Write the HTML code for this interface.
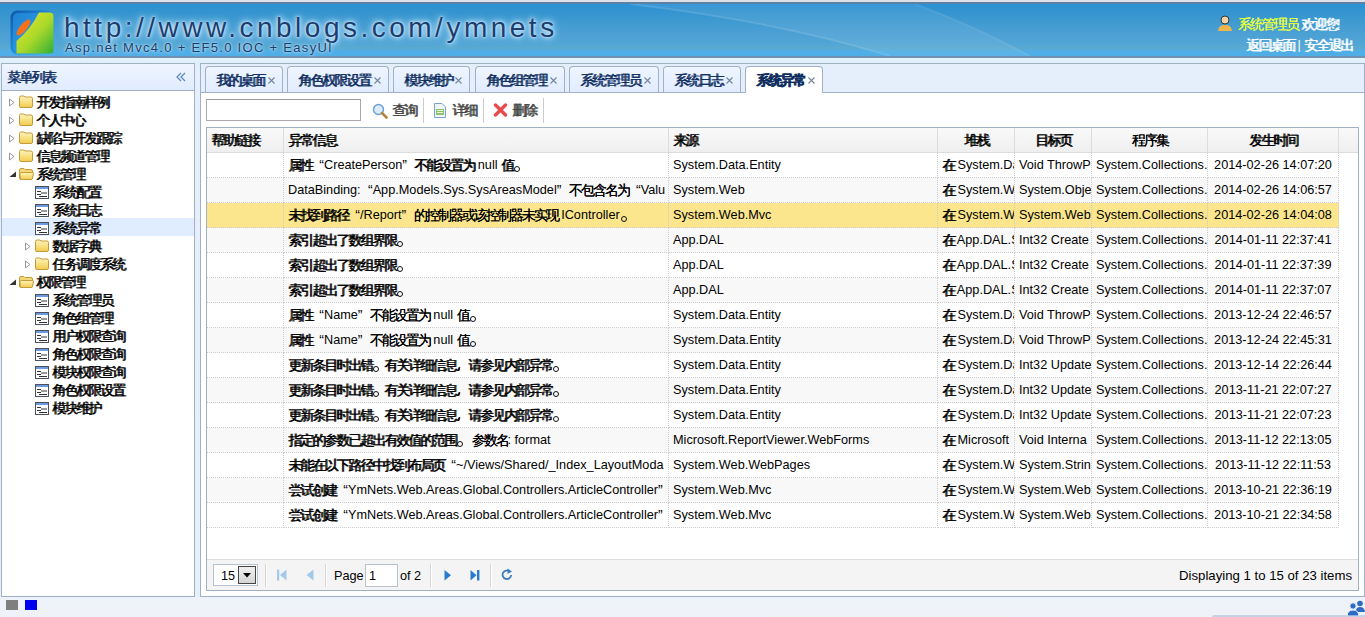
<!DOCTYPE html><html><head><meta charset="utf-8"><title>YmNets</title><style>*{margin:0;padding:0;box-sizing:border-box}
html,body{width:1365px;height:617px;overflow:hidden;background:#eef2fa;font-family:"Liberation Sans",sans-serif;font-size:12.7px;color:#000;position:relative}
em{font-style:normal;display:inline-block;width:12px;text-align:center;font-size:14px;line-height:1;position:relative;top:1px;text-shadow:0.5px 0 0 currentColor}
em.pd,em.pc{color:transparent;text-shadow:none}
em.pd:after{content:"";position:absolute;left:1px;top:8px;width:4px;height:4px;border:1px solid #111;border-radius:50%}
em.pc:after{content:"";position:absolute;left:2px;top:9px;width:2px;height:4px;background:#111;border-radius:1px 1px 1px 0;transform:skewX(-15deg)}
em.ql{text-align:right;text-shadow:none}
em.qr{text-align:left;text-shadow:none}
i{position:absolute;display:block;font-style:normal;line-height:0}
#hd{position:absolute;left:0;top:0;width:1365px;height:58px;background:linear-gradient(to bottom,#dde1ea 0,#dde1ea 2px,#6283a3 2px,#557fa6 4px,#2a92d8 4px,#3193d0 9px,#3d99d0 20px,#4a9fd4 32px,#52a6d6 44px,#5aa9cf 48px,#50aee6 51px,#50aee6 56px,#7092b0 56px,#7092b0 58px)}
#hdb{position:absolute;left:0;top:58px;width:1365px;height:539px;background:linear-gradient(#e4f5fc 0,#e0eefa 4px,#e5eefb 10px,#e7effb 100%)}
#logo{position:absolute;left:10px;top:10px;width:45px;height:45px}
#title{position:absolute;left:64px;top:12px;font-size:28px;letter-spacing:3.5px;color:#1b3d6e;text-shadow:0 0 2px #d8f0ff,0 0 4px #c8e9fc,0 0 7px #b0dcf7,0 0 10px #a0d4f4;white-space:nowrap}
#sub{position:absolute;left:65px;top:40px;font-size:13px;letter-spacing:1.3px;color:#1b3d6e;text-shadow:0 0 2px #d2eefd,0 0 4px #b8e2fa;white-space:nowrap}
#usr{position:absolute;left:1216px;top:15px;white-space:nowrap;color:#fff}
#usr b{font-weight:normal;color:#e6ff3c}
#lnk{position:absolute;left:1246px;top:37px;white-space:nowrap;color:#fff}
#lp{position:absolute;left:1px;top:63px;width:194px;height:534px;border:1px solid #a2b0c4;background:#fff}
#lph{position:absolute;left:0;top:0;width:192px;height:27px;border-bottom:1px solid #a2b0c4;background:linear-gradient(to bottom,#eff5ff 0,#e0ecff 100%)}
#lph .t{position:absolute;left:5px;top:5px;color:#0e2d5f;white-space:nowrap}
#lph .t em{text-shadow:0.6px 0 0 currentColor}
#lph .coll{position:absolute;left:173px;top:8px}
#lpb{position:absolute;left:0;top:27px;width:192px;height:505px}
.tn{position:absolute;left:0;width:192px;height:18px}
.tn.sel{background:#e0ecff}
.tn span{position:absolute;top:2px;white-space:nowrap;color:#000;line-height:16px}
.ic{top:1px;width:16px;height:16px}
#rp{position:absolute;left:200px;top:63px;width:1165px;height:534px;border:1px solid #a2b0c4;background:#fff}
#tabsh{position:absolute;left:0;top:0;width:1163px;height:29px;background:#e4effb;border-bottom:1px solid #a2b0c4}
.tab{position:absolute;top:2px;height:26px;border:1px solid #a2b0c4;border-bottom:0;border-radius:4px 4px 0 0;background:linear-gradient(to bottom,#eff5ff 0,#e0ecff 100%)}
.tab.tsel{background:#fff;height:27px}
.tab.tsel .tt{font-weight:bold}
.tab.tsel .tt em{text-shadow:0.7px 0 0 currentColor}
.tab .tt{position:absolute;left:10px;top:5px;white-space:nowrap;color:#0e2d5f;line-height:16px}
.tab .tx{position:absolute;right:7px;top:10px}
#tb{position:absolute;left:0;top:29px;width:1163px;height:34px}
#sinp{position:absolute;left:5px;top:6px;width:155px;height:22px;border:1px solid #a9a9a9;border-top-color:#9c9c9c;background:#fff}
.lb{position:absolute;top:9px;line-height:16px;color:#444;white-space:nowrap}
.sep{position:absolute;top:5px;width:2px;height:25px;border-left:1px solid #ccc;border-right:1px solid #fff}
#dg{position:absolute;left:5px;top:63px;width:1153px;height:464px;border:1px solid #a2b0c4;background:#fff}
#dgh{position:absolute;left:0;top:0;width:1151px;height:25px;background:linear-gradient(to bottom,#f9f9f9 0,#efefef 100%);border-bottom:1px solid #dddddd}
.hc{position:absolute;top:0;height:24px;border-right:1px solid #dddddd;padding:0 4px;line-height:24px;white-space:nowrap;overflow:hidden}
#dgb{position:absolute;left:0;top:25px;width:1151px;height:375px}
.row{position:absolute;left:0;width:1132px;height:25px;background:#fff}
.row.alt{background:#f8f8f8}
.row.rsel{background:#fbe68d}
.bc{position:absolute;top:0;height:25px;border-right:1px dotted #cccccc;border-bottom:1px dotted #cccccc;padding:0 4px;line-height:24px;white-space:nowrap;overflow:hidden}
#pg{position:absolute;left:0;top:431px;width:1151px;height:31px;background:#f5f4f4;border-top:1px solid #dddddd}
#psel{position:absolute;left:6px;top:4px;width:45px;height:22px;border:1px solid #b7c2cf;background:#fff}
#pbtn{position:absolute;left:24px;top:1px;width:18px;height:18px;border:1px solid #444;background:linear-gradient(#f0f0f0,#d4d4d4)}
.psep{position:absolute;top:4px;width:2px;height:23px;border-left:1px solid #d6d6d6;border-right:1px solid #fff}
.plb{position:absolute;top:8px;line-height:16px;white-space:nowrap}
#pinp{position:absolute;left:158px;top:4px;width:33px;height:23px;border:1px solid #b7c2cf;background:#fff}
#pinfo{left:auto;right:6px;font-size:13.2px}
#ft{position:absolute;left:0;top:597px;width:1365px;height:20px;background:linear-gradient(to bottom,#eef2fa 0,#eff2f7 100%)}
#ftbar{position:absolute;left:1212px;top:18px;width:153px;height:2px;border-radius:2px 0 0 0;background:#c3d3e3}
</style></head><body>
<svg width="0" height="0" style="position:absolute"><defs><linearGradient id="gf" x1="0" y1="0" x2="0" y2="1"><stop offset="0" stop-color="#fff6b8"/><stop offset="1" stop-color="#f1cc4e"/></linearGradient></defs></svg>
<div id="hdb"></div><div id="hd">
<svg id="wave" style="position:absolute;left:0;top:4px" width="1365" height="52" viewBox="0 0 1365 52"><path d="M630 0 Q780 18 890 52 L1030 52 Q975 22 915 0Z" fill="#ffffff" opacity="0.07"/><path d="M630 0 Q780 18 890 52" fill="none" stroke="#ffffff" stroke-width="2" opacity="0.12"/><path d="M915 0 Q975 22 1030 52" fill="none" stroke="#ffffff" stroke-width="2" opacity="0.08"/></svg><svg id="logo" viewBox="0 0 45 45"><defs><linearGradient id="lg1" x1="0" y1="0" x2="1" y2="1"><stop offset="0" stop-color="#0f55a8"/><stop offset="0.5" stop-color="#1f8fe0"/><stop offset="1" stop-color="#3ec0ec"/></linearGradient><linearGradient id="lg2" x1="0" y1="0" x2="1" y2="1"><stop offset="0" stop-color="#f0e82a"/><stop offset="0.55" stop-color="#a8d82a"/><stop offset="1" stop-color="#2eae36"/></linearGradient></defs><rect x="0.5" y="0.5" width="44" height="44" rx="7" fill="url(#lg1)"/><rect x="3" y="3" width="39" height="39" rx="5" fill="#2d9be6" opacity="0.6"/><path d="M29 2.5 L40 2.5 Q43.5 2.5 43.5 6 L43.5 40 Q43.5 43.5 40 43.5 L6.5 43.5 L6.5 31 Q20 20 29 2.5Z" fill="url(#lg2)"/><ellipse cx="13.5" cy="17.5" rx="10" ry="3.5" transform="rotate(-50 13.5 17.5)" fill="#f7701c"/></svg>
<div id="title">http://www.cnblogs.com/ymnets</div>
<div id="sub">Asp.net Mvc4.0 + EF5.0 IOC + EasyUI</div>
<div id="usr"><svg width="18" height="16" style="vertical-align:-3px"><circle cx="9" cy="5" r="4" fill="#f4d3a8" stroke="#333" stroke-width="1"/><path d="M2 16 Q3 9 9 10 Q15 9 16 16Z" fill="#f0b64a"/></svg> <b><em>系</em><em>统</em><em>管</em><em>理</em><em>员</em></b> <em>欢</em><em>迎</em><em>您</em>!</div>
<div id="lnk"><em>返</em><em>回</em><em>桌</em><em>面</em> | <em>安</em><em>全</em><em>退</em><em>出</em></div>
</div>

<div id="lp"><div id="lph"><span class="t"><em>菜</em><em>单</em><em>列</em><em>表</em></span><svg class="coll" width="12" height="10" viewBox="0 0 12 10"><path d="M6 1 L2 5 L6 9 M10 1 L6 5 L10 9" fill="none" stroke="#5b87c1" stroke-width="1.2"/></svg></div><div id="lpb">
<div class="tn" style="top:1px">
<i class="exp" style="left:6px;top:6px"><svg width="8" height="9" viewBox="0 0 8 9"><path d="M1.5 1 L6 4.5 L1.5 8Z" fill="none" stroke="#9a9a9a" stroke-width="1"/></svg></i>
<i class="ic" style="left:16px"><svg width="16" height="16" viewBox="0 0 16 16"><path d="M1.5 4.5 Q1.5 3 3 3 L6 3 L7 4 L13 4 Q14.5 4 14.5 5.5 L14.5 13 Q14.5 14.5 13 14.5 L3 14.5 Q1.5 14.5 1.5 13Z" fill="url(#gf)" stroke="#c49a3c" stroke-width="1"/><path d="M2 6 L14 6" stroke="#f7e9a8" stroke-width="1"/></svg></i>
<span style="left:34px"><em>开</em><em>发</em><em>指</em><em>南</em><em>样</em><em>例</em></span></div>
<div class="tn" style="top:19px">
<i class="exp" style="left:6px;top:6px"><svg width="8" height="9" viewBox="0 0 8 9"><path d="M1.5 1 L6 4.5 L1.5 8Z" fill="none" stroke="#9a9a9a" stroke-width="1"/></svg></i>
<i class="ic" style="left:16px"><svg width="16" height="16" viewBox="0 0 16 16"><path d="M1.5 4.5 Q1.5 3 3 3 L6 3 L7 4 L13 4 Q14.5 4 14.5 5.5 L14.5 13 Q14.5 14.5 13 14.5 L3 14.5 Q1.5 14.5 1.5 13Z" fill="url(#gf)" stroke="#c49a3c" stroke-width="1"/><path d="M2 6 L14 6" stroke="#f7e9a8" stroke-width="1"/></svg></i>
<span style="left:34px"><em>个</em><em>人</em><em>中</em><em>心</em></span></div>
<div class="tn" style="top:37px">
<i class="exp" style="left:6px;top:6px"><svg width="8" height="9" viewBox="0 0 8 9"><path d="M1.5 1 L6 4.5 L1.5 8Z" fill="none" stroke="#9a9a9a" stroke-width="1"/></svg></i>
<i class="ic" style="left:16px"><svg width="16" height="16" viewBox="0 0 16 16"><path d="M1.5 4.5 Q1.5 3 3 3 L6 3 L7 4 L13 4 Q14.5 4 14.5 5.5 L14.5 13 Q14.5 14.5 13 14.5 L3 14.5 Q1.5 14.5 1.5 13Z" fill="url(#gf)" stroke="#c49a3c" stroke-width="1"/><path d="M2 6 L14 6" stroke="#f7e9a8" stroke-width="1"/></svg></i>
<span style="left:34px"><em>缺</em><em>陷</em><em>与</em><em>开</em><em>发</em><em>跟</em><em>踪</em></span></div>
<div class="tn" style="top:55px">
<i class="exp" style="left:6px;top:6px"><svg width="8" height="9" viewBox="0 0 8 9"><path d="M1.5 1 L6 4.5 L1.5 8Z" fill="none" stroke="#9a9a9a" stroke-width="1"/></svg></i>
<i class="ic" style="left:16px"><svg width="16" height="16" viewBox="0 0 16 16"><path d="M1.5 4.5 Q1.5 3 3 3 L6 3 L7 4 L13 4 Q14.5 4 14.5 5.5 L14.5 13 Q14.5 14.5 13 14.5 L3 14.5 Q1.5 14.5 1.5 13Z" fill="url(#gf)" stroke="#c49a3c" stroke-width="1"/><path d="M2 6 L14 6" stroke="#f7e9a8" stroke-width="1"/></svg></i>
<span style="left:34px"><em>信</em><em>息</em><em>频</em><em>道</em><em>管</em><em>理</em></span></div>
<div class="tn" style="top:73px">
<i class="exp" style="left:6px;top:7px"><svg width="8" height="8" viewBox="0 0 8 8"><path d="M8 0.5 L8 6 L1.5 6Z" fill="#333"/></svg></i>
<i class="ic" style="left:16px"><svg width="16" height="16" viewBox="0 0 16 16"><path d="M1.5 5 Q1.5 3.5 3 3.5 L6 3.5 L7 4.5 L13 4.5 Q14.5 4.5 14.5 6 L14.5 13 Q14.5 14.5 13 14.5 L3 14.5 Q1.5 14.5 1.5 13Z" fill="#f3d774" stroke="#c49a3c" stroke-width="1"/><path d="M2 8.5 Q2.2 7.5 3.5 7.5 L15 7.5 Q15.8 7.5 15.4 8.8 L14.5 13.5 Q14.2 14.5 13 14.5 L3.5 14.5 Q2.5 14.5 2.3 13.5Z" fill="url(#gf)" stroke="#c49a3c" stroke-width="1"/></svg></i>
<span style="left:34px"><em>系</em><em>统</em><em>管</em><em>理</em></span></div>
<div class="tn" style="top:91px">
<i class="ic" style="left:32px;top:2px"><svg width="16" height="16" viewBox="0 0 16 16"><rect x="1.5" y="2.5" width="13" height="12" fill="#fff" stroke="#4a4f5c" stroke-width="1"/><rect x="2" y="3" width="12" height="2" fill="#6d9be0"/><path d="M3 7.5 H7 M3 10.5 H7 M7 9 H13 M5 12.5 H13" stroke="#333" stroke-width="1"/></svg></i>
<span style="left:50px"><em>系</em><em>统</em><em>配</em><em>置</em></span></div>
<div class="tn" style="top:109px">
<i class="ic" style="left:32px;top:2px"><svg width="16" height="16" viewBox="0 0 16 16"><rect x="1.5" y="2.5" width="13" height="12" fill="#fff" stroke="#4a4f5c" stroke-width="1"/><rect x="2" y="3" width="12" height="2" fill="#6d9be0"/><path d="M3 7.5 H7 M3 10.5 H7 M7 9 H13 M5 12.5 H13" stroke="#333" stroke-width="1"/></svg></i>
<span style="left:50px"><em>系</em><em>统</em><em>日</em><em>志</em></span></div>
<div class="tn sel" style="top:127px">
<i class="ic" style="left:32px;top:2px"><svg width="16" height="16" viewBox="0 0 16 16"><rect x="1.5" y="2.5" width="13" height="12" fill="#fff" stroke="#4a4f5c" stroke-width="1"/><rect x="2" y="3" width="12" height="2" fill="#6d9be0"/><path d="M3 7.5 H7 M3 10.5 H7 M7 9 H13 M5 12.5 H13" stroke="#333" stroke-width="1"/></svg></i>
<span style="left:50px"><em>系</em><em>统</em><em>异</em><em>常</em></span></div>
<div class="tn" style="top:145px">
<i class="exp" style="left:22px;top:6px"><svg width="8" height="9" viewBox="0 0 8 9"><path d="M1.5 1 L6 4.5 L1.5 8Z" fill="none" stroke="#9a9a9a" stroke-width="1"/></svg></i>
<i class="ic" style="left:32px"><svg width="16" height="16" viewBox="0 0 16 16"><path d="M1.5 4.5 Q1.5 3 3 3 L6 3 L7 4 L13 4 Q14.5 4 14.5 5.5 L14.5 13 Q14.5 14.5 13 14.5 L3 14.5 Q1.5 14.5 1.5 13Z" fill="url(#gf)" stroke="#c49a3c" stroke-width="1"/><path d="M2 6 L14 6" stroke="#f7e9a8" stroke-width="1"/></svg></i>
<span style="left:50px"><em>数</em><em>据</em><em>字</em><em>典</em></span></div>
<div class="tn" style="top:163px">
<i class="exp" style="left:22px;top:6px"><svg width="8" height="9" viewBox="0 0 8 9"><path d="M1.5 1 L6 4.5 L1.5 8Z" fill="none" stroke="#9a9a9a" stroke-width="1"/></svg></i>
<i class="ic" style="left:32px"><svg width="16" height="16" viewBox="0 0 16 16"><path d="M1.5 4.5 Q1.5 3 3 3 L6 3 L7 4 L13 4 Q14.5 4 14.5 5.5 L14.5 13 Q14.5 14.5 13 14.5 L3 14.5 Q1.5 14.5 1.5 13Z" fill="url(#gf)" stroke="#c49a3c" stroke-width="1"/><path d="M2 6 L14 6" stroke="#f7e9a8" stroke-width="1"/></svg></i>
<span style="left:50px"><em>任</em><em>务</em><em>调</em><em>度</em><em>系</em><em>统</em></span></div>
<div class="tn" style="top:181px">
<i class="exp" style="left:6px;top:7px"><svg width="8" height="8" viewBox="0 0 8 8"><path d="M8 0.5 L8 6 L1.5 6Z" fill="#333"/></svg></i>
<i class="ic" style="left:16px"><svg width="16" height="16" viewBox="0 0 16 16"><path d="M1.5 5 Q1.5 3.5 3 3.5 L6 3.5 L7 4.5 L13 4.5 Q14.5 4.5 14.5 6 L14.5 13 Q14.5 14.5 13 14.5 L3 14.5 Q1.5 14.5 1.5 13Z" fill="#f3d774" stroke="#c49a3c" stroke-width="1"/><path d="M2 8.5 Q2.2 7.5 3.5 7.5 L15 7.5 Q15.8 7.5 15.4 8.8 L14.5 13.5 Q14.2 14.5 13 14.5 L3.5 14.5 Q2.5 14.5 2.3 13.5Z" fill="url(#gf)" stroke="#c49a3c" stroke-width="1"/></svg></i>
<span style="left:34px"><em>权</em><em>限</em><em>管</em><em>理</em></span></div>
<div class="tn" style="top:199px">
<i class="ic" style="left:32px;top:2px"><svg width="16" height="16" viewBox="0 0 16 16"><rect x="1.5" y="2.5" width="13" height="12" fill="#fff" stroke="#4a4f5c" stroke-width="1"/><rect x="2" y="3" width="12" height="2" fill="#6d9be0"/><path d="M3 7.5 H7 M3 10.5 H7 M7 9 H13 M5 12.5 H13" stroke="#333" stroke-width="1"/></svg></i>
<span style="left:50px"><em>系</em><em>统</em><em>管</em><em>理</em><em>员</em></span></div>
<div class="tn" style="top:217px">
<i class="ic" style="left:32px;top:2px"><svg width="16" height="16" viewBox="0 0 16 16"><rect x="1.5" y="2.5" width="13" height="12" fill="#fff" stroke="#4a4f5c" stroke-width="1"/><rect x="2" y="3" width="12" height="2" fill="#6d9be0"/><path d="M3 7.5 H7 M3 10.5 H7 M7 9 H13 M5 12.5 H13" stroke="#333" stroke-width="1"/></svg></i>
<span style="left:50px"><em>角</em><em>色</em><em>组</em><em>管</em><em>理</em></span></div>
<div class="tn" style="top:235px">
<i class="ic" style="left:32px;top:2px"><svg width="16" height="16" viewBox="0 0 16 16"><rect x="1.5" y="2.5" width="13" height="12" fill="#fff" stroke="#4a4f5c" stroke-width="1"/><rect x="2" y="3" width="12" height="2" fill="#6d9be0"/><path d="M3 7.5 H7 M3 10.5 H7 M7 9 H13 M5 12.5 H13" stroke="#333" stroke-width="1"/></svg></i>
<span style="left:50px"><em>用</em><em>户</em><em>权</em><em>限</em><em>查</em><em>询</em></span></div>
<div class="tn" style="top:253px">
<i class="ic" style="left:32px;top:2px"><svg width="16" height="16" viewBox="0 0 16 16"><rect x="1.5" y="2.5" width="13" height="12" fill="#fff" stroke="#4a4f5c" stroke-width="1"/><rect x="2" y="3" width="12" height="2" fill="#6d9be0"/><path d="M3 7.5 H7 M3 10.5 H7 M7 9 H13 M5 12.5 H13" stroke="#333" stroke-width="1"/></svg></i>
<span style="left:50px"><em>角</em><em>色</em><em>权</em><em>限</em><em>查</em><em>询</em></span></div>
<div class="tn" style="top:271px">
<i class="ic" style="left:32px;top:2px"><svg width="16" height="16" viewBox="0 0 16 16"><rect x="1.5" y="2.5" width="13" height="12" fill="#fff" stroke="#4a4f5c" stroke-width="1"/><rect x="2" y="3" width="12" height="2" fill="#6d9be0"/><path d="M3 7.5 H7 M3 10.5 H7 M7 9 H13 M5 12.5 H13" stroke="#333" stroke-width="1"/></svg></i>
<span style="left:50px"><em>模</em><em>块</em><em>权</em><em>限</em><em>查</em><em>询</em></span></div>
<div class="tn" style="top:289px">
<i class="ic" style="left:32px;top:2px"><svg width="16" height="16" viewBox="0 0 16 16"><rect x="1.5" y="2.5" width="13" height="12" fill="#fff" stroke="#4a4f5c" stroke-width="1"/><rect x="2" y="3" width="12" height="2" fill="#6d9be0"/><path d="M3 7.5 H7 M3 10.5 H7 M7 9 H13 M5 12.5 H13" stroke="#333" stroke-width="1"/></svg></i>
<span style="left:50px"><em>角</em><em>色</em><em>权</em><em>限</em><em>设</em><em>置</em></span></div>
<div class="tn" style="top:307px">
<i class="ic" style="left:32px;top:2px"><svg width="16" height="16" viewBox="0 0 16 16"><rect x="1.5" y="2.5" width="13" height="12" fill="#fff" stroke="#4a4f5c" stroke-width="1"/><rect x="2" y="3" width="12" height="2" fill="#6d9be0"/><path d="M3 7.5 H7 M3 10.5 H7 M7 9 H13 M5 12.5 H13" stroke="#333" stroke-width="1"/></svg></i>
<span style="left:50px"><em>模</em><em>块</em><em>维</em><em>护</em></span></div>
</div></div>
<div id="rp"><div id="tabsh">
<div class="tab" style="left:4px;width:78px"><span class="tt"><em>我</em><em>的</em><em>桌</em><em>面</em></span><svg class="tx" width="7" height="7" viewBox="0 0 7 7"><path d="M0.5 0.5 L6.5 6.5 M6.5 0.5 L0.5 6.5" stroke="#75849c" stroke-width="1.1"/></svg></div>
<div class="tab" style="left:86px;width:102px"><span class="tt"><em>角</em><em>色</em><em>权</em><em>限</em><em>设</em><em>置</em></span><svg class="tx" width="7" height="7" viewBox="0 0 7 7"><path d="M0.5 0.5 L6.5 6.5 M6.5 0.5 L0.5 6.5" stroke="#75849c" stroke-width="1.1"/></svg></div>
<div class="tab" style="left:192px;width:77px"><span class="tt"><em>模</em><em>块</em><em>维</em><em>护</em></span><svg class="tx" width="7" height="7" viewBox="0 0 7 7"><path d="M0.5 0.5 L6.5 6.5 M6.5 0.5 L0.5 6.5" stroke="#75849c" stroke-width="1.1"/></svg></div>
<div class="tab" style="left:274px;width:90px"><span class="tt"><em>角</em><em>色</em><em>组</em><em>管</em><em>理</em></span><svg class="tx" width="7" height="7" viewBox="0 0 7 7"><path d="M0.5 0.5 L6.5 6.5 M6.5 0.5 L0.5 6.5" stroke="#75849c" stroke-width="1.1"/></svg></div>
<div class="tab" style="left:368px;width:90px"><span class="tt"><em>系</em><em>统</em><em>管</em><em>理</em><em>员</em></span><svg class="tx" width="7" height="7" viewBox="0 0 7 7"><path d="M0.5 0.5 L6.5 6.5 M6.5 0.5 L0.5 6.5" stroke="#75849c" stroke-width="1.1"/></svg></div>
<div class="tab" style="left:462px;width:78px"><span class="tt"><em>系</em><em>统</em><em>日</em><em>志</em></span><svg class="tx" width="7" height="7" viewBox="0 0 7 7"><path d="M0.5 0.5 L6.5 6.5 M6.5 0.5 L0.5 6.5" stroke="#75849c" stroke-width="1.1"/></svg></div>
<div class="tab tsel" style="left:544px;width:78px"><span class="tt"><em>系</em><em>统</em><em>异</em><em>常</em></span><svg class="tx" width="7" height="7" viewBox="0 0 7 7"><path d="M0.5 0.5 L6.5 6.5 M6.5 0.5 L0.5 6.5" stroke="#75849c" stroke-width="1.1"/></svg></div>
</div>
<div id="tb">
<div id="sinp"></div>
<i style="left:171px;top:10px"><svg width="16" height="16" viewBox="0 0 16 16"><circle cx="6.5" cy="6.5" r="5" fill="#d8ecfb" stroke="#6a9fcf" stroke-width="1.4"/><path d="M10 10 L14.5 14.5" stroke="#b0863a" stroke-width="2.6" stroke-linecap="round"/></svg></i>
<span class="lb" style="left:191px"><em>查</em><em>询</em></span>
<span class="sep" style="left:222px"></span>
<i style="left:232px;top:9px"><svg width="14" height="17" viewBox="0 0 14 17"><path d="M1.5 1.5 H9 L12.5 5 V15.5 H1.5Z" fill="#eef5fc" stroke="#7fa3c8" stroke-width="1"/><rect x="3" y="7" width="8" height="6" fill="#8cc06a"/><path d="M4 8.5 H10 M4 10.5 H10" stroke="#e9f6df" stroke-width="1"/></svg></i>
<span class="lb" style="left:251px"><em>详</em><em>细</em></span>
<span class="sep" style="left:282px"></span>
<i style="left:292px;top:10px"><svg width="15" height="14" viewBox="0 0 15 14"><path d="M2.5 2 L12.5 12 M12.5 2 L2.5 12" stroke="#e84b4b" stroke-width="3.4" stroke-linecap="round"/></svg></i>
<span class="lb" style="left:311px"><em>删</em><em>除</em></span>
<span class="sep" style="left:342px"></span>
</div>

<div id="dg"><div id="dgh">
<div class="hc" style="left:0px;width:77px;text-align:left"><em>帮</em><em>助</em><em>链</em><em>接</em></div>
<div class="hc" style="left:77px;width:385px;text-align:left"><em>异</em><em>常</em><em>信</em><em>息</em></div>
<div class="hc" style="left:462px;width:269px;text-align:left"><em>来</em><em>源</em></div>
<div class="hc" style="left:731px;width:77px;text-align:center"><em>堆</em><em>栈</em></div>
<div class="hc" style="left:808px;width:77px;text-align:center"><em>目</em><em>标</em><em>页</em></div>
<div class="hc" style="left:885px;width:116px;text-align:center"><em>程</em><em>序</em><em>集</em></div>
<div class="hc" style="left:1001px;width:131px;text-align:center"><em>发</em><em>生</em><em>时</em><em>间</em></div>
</div><div id="dgb">
<div class="row" style="top:0px">
<div class="bc" style="left:0px;width:77px"></div>
<div class="bc" style="left:77px;width:385px"><em>属</em><em>性</em><em class="ql">“</em>CreatePerson<em class="qr">”</em><em>不</em><em>能</em><em>设</em><em>置</em><em>为</em> null <em>值</em><em class="pd">。</em></div>
<div class="bc" style="left:462px;width:269px">System.Data.Entity</div>
<div class="bc" style="left:731px;width:77px"><em>在</em> System.Data.Entity</div>
<div class="bc" style="left:808px;width:77px">Void ThrowPropertyIsNull</div>
<div class="bc" style="left:885px;width:116px">System.Collections.</div>
<div class="bc" style="left:1001px;width:131px;text-align:center">2014-02-26 14:07:20</div>
</div>
<div class="row alt" style="top:25px">
<div class="bc" style="left:0px;width:77px"></div>
<div class="bc" style="left:77px;width:385px">DataBinding:<em class="ql">“</em>App.Models.Sys.SysAreasModel<em class="qr">”</em><em>不</em><em>包</em><em>含</em><em>名</em><em>为</em><em class="ql">“</em>Valu</div>
<div class="bc" style="left:462px;width:269px">System.Web</div>
<div class="bc" style="left:731px;width:77px"><em>在</em> System.Web.UI</div>
<div class="bc" style="left:808px;width:77px">System.Object GetProperty</div>
<div class="bc" style="left:885px;width:116px">System.Collections.</div>
<div class="bc" style="left:1001px;width:131px;text-align:center">2014-02-26 14:06:57</div>
</div>
<div class="row rsel" style="top:50px">
<div class="bc" style="left:0px;width:77px"></div>
<div class="bc" style="left:77px;width:385px"><em>未</em><em>找</em><em>到</em><em>路</em><em>径</em><em class="ql">“</em>/Report<em class="qr">”</em><em>的</em><em>控</em><em>制</em><em>器</em><em>或</em><em>该</em><em>控</em><em>制</em><em>器</em><em>未</em><em>实</em><em>现</em> IController<em class="pd">。</em></div>
<div class="bc" style="left:462px;width:269px">System.Web.Mvc</div>
<div class="bc" style="left:731px;width:77px"><em>在</em> System.Web.Mvc</div>
<div class="bc" style="left:808px;width:77px">System.Web.Mvc</div>
<div class="bc" style="left:885px;width:116px">System.Collections.</div>
<div class="bc" style="left:1001px;width:131px;text-align:center">2014-02-26 14:04:08</div>
</div>
<div class="row alt" style="top:75px">
<div class="bc" style="left:0px;width:77px"></div>
<div class="bc" style="left:77px;width:385px"><em>索</em><em>引</em><em>超</em><em>出</em><em>了</em><em>数</em><em>组</em><em>界</em><em>限</em><em class="pd">。</em></div>
<div class="bc" style="left:462px;width:269px">App.DAL</div>
<div class="bc" style="left:731px;width:77px"><em>在</em> App.DAL.SysException</div>
<div class="bc" style="left:808px;width:77px">Int32 Create</div>
<div class="bc" style="left:885px;width:116px">System.Collections.</div>
<div class="bc" style="left:1001px;width:131px;text-align:center">2014-01-11 22:37:41</div>
</div>
<div class="row" style="top:100px">
<div class="bc" style="left:0px;width:77px"></div>
<div class="bc" style="left:77px;width:385px"><em>索</em><em>引</em><em>超</em><em>出</em><em>了</em><em>数</em><em>组</em><em>界</em><em>限</em><em class="pd">。</em></div>
<div class="bc" style="left:462px;width:269px">App.DAL</div>
<div class="bc" style="left:731px;width:77px"><em>在</em> App.DAL.SysException</div>
<div class="bc" style="left:808px;width:77px">Int32 Create</div>
<div class="bc" style="left:885px;width:116px">System.Collections.</div>
<div class="bc" style="left:1001px;width:131px;text-align:center">2014-01-11 22:37:39</div>
</div>
<div class="row alt" style="top:125px">
<div class="bc" style="left:0px;width:77px"></div>
<div class="bc" style="left:77px;width:385px"><em>索</em><em>引</em><em>超</em><em>出</em><em>了</em><em>数</em><em>组</em><em>界</em><em>限</em><em class="pd">。</em></div>
<div class="bc" style="left:462px;width:269px">App.DAL</div>
<div class="bc" style="left:731px;width:77px"><em>在</em> App.DAL.SysException</div>
<div class="bc" style="left:808px;width:77px">Int32 Create</div>
<div class="bc" style="left:885px;width:116px">System.Collections.</div>
<div class="bc" style="left:1001px;width:131px;text-align:center">2014-01-11 22:37:07</div>
</div>
<div class="row" style="top:150px">
<div class="bc" style="left:0px;width:77px"></div>
<div class="bc" style="left:77px;width:385px"><em>属</em><em>性</em><em class="ql">“</em>Name<em class="qr">”</em><em>不</em><em>能</em><em>设</em><em>置</em><em>为</em> null <em>值</em><em class="pd">。</em></div>
<div class="bc" style="left:462px;width:269px">System.Data.Entity</div>
<div class="bc" style="left:731px;width:77px"><em>在</em> System.Data.Entity</div>
<div class="bc" style="left:808px;width:77px">Void ThrowPropertyIsNull</div>
<div class="bc" style="left:885px;width:116px">System.Collections.</div>
<div class="bc" style="left:1001px;width:131px;text-align:center">2013-12-24 22:46:57</div>
</div>
<div class="row alt" style="top:175px">
<div class="bc" style="left:0px;width:77px"></div>
<div class="bc" style="left:77px;width:385px"><em>属</em><em>性</em><em class="ql">“</em>Name<em class="qr">”</em><em>不</em><em>能</em><em>设</em><em>置</em><em>为</em> null <em>值</em><em class="pd">。</em></div>
<div class="bc" style="left:462px;width:269px">System.Data.Entity</div>
<div class="bc" style="left:731px;width:77px"><em>在</em> System.Data.Entity</div>
<div class="bc" style="left:808px;width:77px">Void ThrowPropertyIsNull</div>
<div class="bc" style="left:885px;width:116px">System.Collections.</div>
<div class="bc" style="left:1001px;width:131px;text-align:center">2013-12-24 22:45:31</div>
</div>
<div class="row" style="top:200px">
<div class="bc" style="left:0px;width:77px"></div>
<div class="bc" style="left:77px;width:385px"><em>更</em><em>新</em><em>条</em><em>目</em><em>时</em><em>出</em><em>错</em><em class="pd">。</em><em>有</em><em>关</em><em>详</em><em>细</em><em>信</em><em>息</em><em class="pc">，</em><em>请</em><em>参</em><em>见</em><em>内</em><em>部</em><em>异</em><em>常</em><em class="pd">。</em></div>
<div class="bc" style="left:462px;width:269px">System.Data.Entity</div>
<div class="bc" style="left:731px;width:77px"><em>在</em> System.Data.Entity</div>
<div class="bc" style="left:808px;width:77px">Int32 Update</div>
<div class="bc" style="left:885px;width:116px">System.Collections.</div>
<div class="bc" style="left:1001px;width:131px;text-align:center">2013-12-14 22:26:44</div>
</div>
<div class="row alt" style="top:225px">
<div class="bc" style="left:0px;width:77px"></div>
<div class="bc" style="left:77px;width:385px"><em>更</em><em>新</em><em>条</em><em>目</em><em>时</em><em>出</em><em>错</em><em class="pd">。</em><em>有</em><em>关</em><em>详</em><em>细</em><em>信</em><em>息</em><em class="pc">，</em><em>请</em><em>参</em><em>见</em><em>内</em><em>部</em><em>异</em><em>常</em><em class="pd">。</em></div>
<div class="bc" style="left:462px;width:269px">System.Data.Entity</div>
<div class="bc" style="left:731px;width:77px"><em>在</em> System.Data.Entity</div>
<div class="bc" style="left:808px;width:77px">Int32 Update</div>
<div class="bc" style="left:885px;width:116px">System.Collections.</div>
<div class="bc" style="left:1001px;width:131px;text-align:center">2013-11-21 22:07:27</div>
</div>
<div class="row" style="top:250px">
<div class="bc" style="left:0px;width:77px"></div>
<div class="bc" style="left:77px;width:385px"><em>更</em><em>新</em><em>条</em><em>目</em><em>时</em><em>出</em><em>错</em><em class="pd">。</em><em>有</em><em>关</em><em>详</em><em>细</em><em>信</em><em>息</em><em class="pc">，</em><em>请</em><em>参</em><em>见</em><em>内</em><em>部</em><em>异</em><em>常</em><em class="pd">。</em></div>
<div class="bc" style="left:462px;width:269px">System.Data.Entity</div>
<div class="bc" style="left:731px;width:77px"><em>在</em> System.Data.Entity</div>
<div class="bc" style="left:808px;width:77px">Int32 Update</div>
<div class="bc" style="left:885px;width:116px">System.Collections.</div>
<div class="bc" style="left:1001px;width:131px;text-align:center">2013-11-21 22:07:23</div>
</div>
<div class="row alt" style="top:275px">
<div class="bc" style="left:0px;width:77px"></div>
<div class="bc" style="left:77px;width:385px"><em>指</em><em>定</em><em>的</em><em>参</em><em>数</em><em>已</em><em>超</em><em>出</em><em>有</em><em>效</em><em>值</em><em>的</em><em>范</em><em>围</em><em class="pd">。</em> <em>参</em><em>数</em><em>名</em>: format</div>
<div class="bc" style="left:462px;width:269px">Microsoft.ReportViewer.WebForms</div>
<div class="bc" style="left:731px;width:77px"><em>在</em> Microsoft</div>
<div class="bc" style="left:808px;width:77px">Void Interna</div>
<div class="bc" style="left:885px;width:116px">System.Collections.</div>
<div class="bc" style="left:1001px;width:131px;text-align:center">2013-11-12 22:13:05</div>
</div>
<div class="row" style="top:300px">
<div class="bc" style="left:0px;width:77px"></div>
<div class="bc" style="left:77px;width:385px"><em>未</em><em>能</em><em>在</em><em>以</em><em>下</em><em>路</em><em>径</em><em>中</em><em>找</em><em>到</em><em>布</em><em>局</em><em>页</em><em class="ql">“</em>~/Views/Shared/_Index_LayoutModa</div>
<div class="bc" style="left:462px;width:269px">System.Web.WebPages</div>
<div class="bc" style="left:731px;width:77px"><em>在</em> System.Web.WebPages</div>
<div class="bc" style="left:808px;width:77px">System.String GetLayout</div>
<div class="bc" style="left:885px;width:116px">System.Collections.</div>
<div class="bc" style="left:1001px;width:131px;text-align:center">2013-11-12 22:11:53</div>
</div>
<div class="row alt" style="top:325px">
<div class="bc" style="left:0px;width:77px"></div>
<div class="bc" style="left:77px;width:385px"><em>尝</em><em>试</em><em>创</em><em>建</em><em class="ql">“</em>YmNets.Web.Areas.Global.Controllers.ArticleController<em class="qr">”</em></div>
<div class="bc" style="left:462px;width:269px">System.Web.Mvc</div>
<div class="bc" style="left:731px;width:77px"><em>在</em> System.Web.Mvc</div>
<div class="bc" style="left:808px;width:77px">System.Web.Mvc</div>
<div class="bc" style="left:885px;width:116px">System.Collections.</div>
<div class="bc" style="left:1001px;width:131px;text-align:center">2013-10-21 22:36:19</div>
</div>
<div class="row" style="top:350px">
<div class="bc" style="left:0px;width:77px"></div>
<div class="bc" style="left:77px;width:385px"><em>尝</em><em>试</em><em>创</em><em>建</em><em class="ql">“</em>YmNets.Web.Areas.Global.Controllers.ArticleController<em class="qr">”</em></div>
<div class="bc" style="left:462px;width:269px">System.Web.Mvc</div>
<div class="bc" style="left:731px;width:77px"><em>在</em> System.Web.Mvc</div>
<div class="bc" style="left:808px;width:77px">System.Web.Mvc</div>
<div class="bc" style="left:885px;width:116px">System.Collections.</div>
<div class="bc" style="left:1001px;width:131px;text-align:center">2013-10-21 22:34:58</div>
</div>
</div>
<div id="pg">
<div id="psel"><span style="position:absolute;left:7px;top:3px;line-height:16px">15</span><div id="pbtn"><svg width="16" height="16" viewBox="0 0 16 16" style="position:absolute;left:0;top:0"><path d="M4 6 H12 L8 10.5Z" fill="#000"/></svg></div></div>
<span class="psep" style="left:58px"></span>
<i style="left:70px;top:9px"><svg width="10" height="12" viewBox="0 0 10 12"><rect x="0" y="0.5" width="2.2" height="11" fill="#a3c9ea"/><path d="M9.5 0.5 V11.5 L3 6Z" fill="#a3c9ea"/></svg></i>
<i style="left:99px;top:9px"><svg width="8" height="12" viewBox="0 0 8 12"><path d="M7.5 0.5 V11.5 L0.5 6Z" fill="#a3c9ea"/></svg></i>
<span class="psep" style="left:118px"></span>
<span class="plb" style="left:127px">Page</span>
<div id="pinp"><span style="position:absolute;left:3px;top:3px;line-height:16px">1</span></div>
<span class="plb" style="left:193px">of 2</span>
<span class="psep" style="left:223px"></span>
<i style="left:237px;top:10px"><svg width="8" height="11" viewBox="0 0 8 11"><path d="M0.5 0 V10.5 L7 5.25Z" fill="#2a7bd0"/></svg></i>
<i style="left:263px;top:10px"><svg width="10" height="11" viewBox="0 0 10 11"><path d="M0.5 0 V10.5 L6.5 5.25Z" fill="#2a7bd0"/><rect x="7" y="0" width="2.4" height="10.5" fill="#2a7bd0"/></svg></i>
<span class="psep" style="left:283px"></span>
<i style="left:294px;top:8px"><svg width="12" height="13" viewBox="0 0 12 13"><path d="M8.8 3.6 A4.3 4.3 0 1 0 10.2 7" fill="none" stroke="#3b7cbd" stroke-width="1.8"/><path d="M6.5 0.5 L11 3.8 L6.5 5.8Z" fill="#3b7cbd"/></svg></i>
<span class="plb" id="pinfo">Displaying 1 to 15 of 23 items</span>
</div>

</div></div>
<div id="ft">
<div id="ftbar"></div>
<div style="position:absolute;left:6px;top:3px;width:12px;height:10px;background:#7f7f7f"></div>
<div style="position:absolute;left:25px;top:3px;width:12px;height:10px;background:#0000ee"></div>
<svg style="position:absolute;left:1346px;top:3px" width="19" height="16" viewBox="0 0 19 16"><circle cx="14" cy="3.5" r="2.8" fill="#2d6bc4"/><path d="M9.5 12 Q10 7 14 7 Q18.5 7 19 12Z" fill="#2d6bc4"/><circle cx="7" cy="6" r="3.2" fill="#2d6bc4" stroke="#eef3fa" stroke-width="1"/><path d="M1 16 Q1.5 10 7 10 Q12.5 10 13 16Z" fill="#2d6bc4" stroke="#eef3fa" stroke-width="1"/></svg>
</div>

</body></html>
